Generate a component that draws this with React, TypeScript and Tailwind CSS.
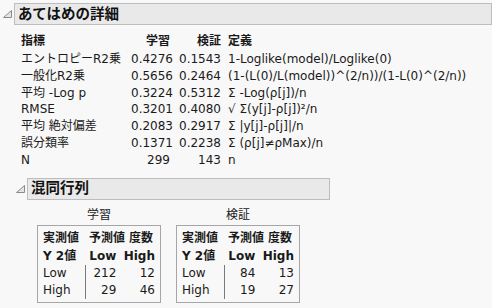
import React from "react";

const font = { fontFamily: "'DejaVu Sans', 'Noto Sans CJK JP', sans-serif" };

const rows = [
  { name: "エントロピーR2乗", train: "0.4276", valid: "0.1543", def: "1-Loglike(model)/Loglike(0)" },
  { name: "一般化R2乗", train: "0.5656", valid: "0.2464", def: "(1-(L(0)/L(model))^(2/n))/(1-L(0)^(2/n))" },
  { name: "平均 -Log p", train: "0.3224", valid: "0.5312", def: "Σ -Log(ρ[j])/n" },
  { name: "RMSE", train: "0.3201", valid: "0.4080", def: "√ Σ(y[j]-ρ[j])²/n" },
  { name: "平均 絶対偏差", train: "0.2083", valid: "0.2917", def: "Σ |y[j]-ρ[j]|/n" },
  { name: "誤分類率", train: "0.1371", valid: "0.2238", def: "Σ (ρ[j]≠ρMax)/n" },
  { name: "N", train: "299", valid: "143", def: "n" },
];

const matrices = [
  { title: "学習", cells: [["212", "12"], ["29", "46"]] },
  { title: "検証", cells: [["84", "13"], ["19", "27"]] },
];

const Toggle = () => (
  <svg width="9" height="8" viewBox="0 0 9 8" className="shrink-0">
    <polygon points="8.5,0.5 8.5,7.5 0.5,7.5" fill="#e4e4e4" stroke="#8a8a8a" strokeWidth="1" />
  </svg>
);

const SectionBar = ({ title, width }: { title: string; width: string }) => (
  <div className={`${width} h-[22px] border border-[#bdbdbd] bg-[#e9e9e9] flex items-center pl-[3px]`}>
    <span className="text-[14.5px] font-bold text-[#111] leading-none">{title}</span>
  </div>
);

const App = () => {
  return (
    <div className="w-[492px] h-[308px] bg-[#f8f8f8] text-[#1a1a1a] overflow-hidden pt-[3px]" style={font}>
      <div className="flex items-center gap-[2px] pl-[3px]">
        <Toggle />
        <SectionBar title="あてはめの詳細" width="w-[478px]" />
      </div>

      <div className="pl-[21px] pt-[8px] text-[12px]">
        <div className="flex leading-[17px] font-bold">
          <div className="w-[110px]">指標</div>
          <div className="w-[39px] text-right">学習</div>
          <div className="w-[51px] text-right">検証</div>
          <div className="pl-[7px]">定義</div>
        </div>
        <div className="mt-[1px]">
          {rows.map((r) => (
            <div key={r.name} className="flex leading-[16.8px] whitespace-nowrap">
              <div className="w-[110px]">{r.name}</div>
              <div className="w-[39px] text-right">{r.train}</div>
              <div className="w-[51px] text-right">{r.valid}</div>
              <div className="pl-[7px]">{r.def}</div>
            </div>
          ))}
        </div>
      </div>

      <div className="flex items-center gap-[2px] pl-[16px] mt-[9px]">
        <Toggle />
        <SectionBar title="混同行列" width="w-[303px]" />
      </div>

      <div className="flex gap-[15px] pl-[37px] mt-[7px] text-[12px]">
        {matrices.map((m) => (
          <div key={m.title} className="w-[124px] flex flex-col">
            <div className="text-center leading-[17px] mb-[1px]">{m.title}</div>
            <div className="border border-[#a6a6a6] pl-[5px] pr-[5px] pt-[3px] pb-[3px]">
              <div className="flex font-bold leading-[18px] whitespace-nowrap">
                <span>実測値</span>
                <span className="ml-[10px]">予測値</span>
                <span className="ml-[4px]">度数</span>
              </div>
              <div className="flex font-bold leading-[18px]">
                <div className="w-[42px]">Y 2値</div>
                <div className="w-[32px] text-right">Low</div>
                <div className="w-[39px] text-right">High</div>
              </div>
              {["Low", "High"].map((label, i) => (
                <div key={label} className="flex leading-[17px]">
                  <div className="w-[42px]">{label}</div>
                  <div className="w-[32px] text-right border-l border-[#7a7a7a]">{m.cells[i][0]}</div>
                  <div className="w-[39px] text-right">{m.cells[i][1]}</div>
                </div>
              ))}
            </div>
          </div>
        ))}
      </div>
    </div>
  );
};

export default App;
